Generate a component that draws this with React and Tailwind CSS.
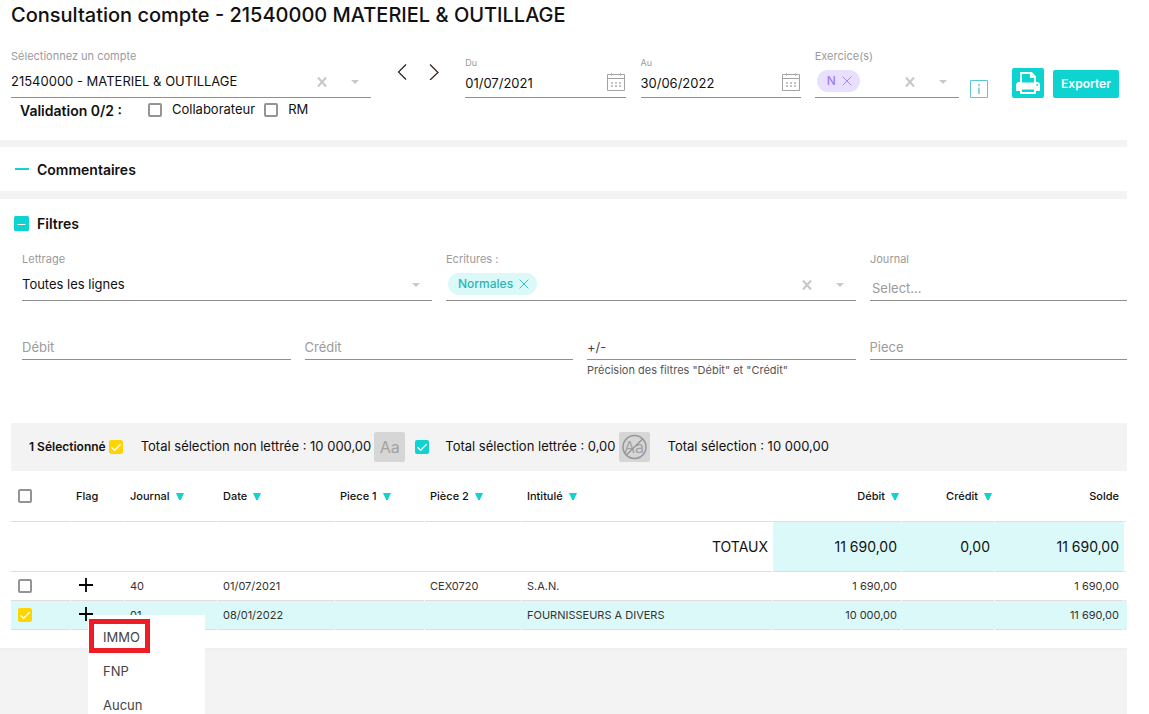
import { useState } from 'react';
import clsx from 'clsx';

const columns = [
  { label: 'Flag', width: 'w-[54px]' },
  { label: 'Journal', width: 'w-[93px]', sort: true },
  { label: 'Date', width: 'w-[117px]', sort: true },
  { label: 'Piece 1', width: 'w-[90px]', sort: true },
  { label: 'Pièce 2', width: 'w-[97px]', sort: true },
  { label: 'Intitulé', width: 'w-auto', sort: true },
  { label: 'Débit', width: 'w-[129px]', sort: true, align: 'text-right' },
  { label: 'Crédit', width: 'w-[93px]', sort: true, align: 'text-right' },
  { label: 'Solde', width: 'w-[129px]', align: 'text-right' },
];

const rows = [
  { id: 1, journal: '40', date: '01/07/2021', piece2: 'CEX0720', intitule: 'S.A.N.', debit: '1 690,00', solde: '1 690,00' },
  { id: 2, journal: '01', date: '08/01/2022', piece2: '', intitule: 'FOURNISSEURS A DIVERS', debit: '10 000,00', solde: '11 690,00' },
];

const flags = ['IMMO', 'FNP', 'Aucun'];

// Bottom border of a cell, with the small notch between two columns
const cellLine =
  "relative border-b border-[#dedede] after:absolute after:right-0 after:-bottom-px after:h-px after:w-px after:bg-white after:content-['']";

function Checkbox({ color = 'yellow', ...props }) {
  return (
    <span className="relative block size-[14px] shrink-0">
      <input
        type="checkbox"
        className={clsx(
          'peer block size-[14px] appearance-none rounded-[2px] border-2 border-[#949494] bg-white',
          color === 'yellow'
            ? 'checked:border-[#ffd400] checked:bg-[#ffd400]'
            : 'checked:border-[#0dd3d1] checked:bg-[#0dd3d1]',
        )}
        {...props}
      />
      <svg
        viewBox="0 0 14 14"
        className="pointer-events-none absolute inset-0 hidden size-[14px] peer-checked:block"
        fill="none"
        stroke="#fff"
        strokeWidth="1.4"
      >
        <path d="M2.5 7.2 5.6 10.2 11.6 4.2" />
      </svg>
    </span>
  );
}

function Caret() {
  return (
    <svg viewBox="0 0 8 4" className="pointer-events-none mr-[12px] h-1 w-2 shrink-0" fill="#c9c9c9">
      <path d="M0 0h8L4 4z" />
    </svg>
  );
}

function ClearButton({ label }) {
  return (
    <button type="button" aria-label={label} className="mr-[24px] shrink-0">
      <svg viewBox="0 0 10 10" className="size-[10px]" fill="none" stroke="#c9c9c9" strokeWidth="2.2">
        <path d="M1 .5 9 9.5M9 .5 1 9.5" />
      </svg>
    </button>
  );
}

function Chip({ children, className }) {
  return (
    <span className={clsx('flex h-[22px] shrink-0 items-center gap-[6px] rounded-full pl-[10px] pr-[8px] text-[12px] font-medium', className)}>
      {children}
      <button type="button" aria-label={`Retirer ${children}`}>
        <svg viewBox="0 0 10 10" className="size-[10px]" fill="none" stroke="currentColor" strokeWidth=".9">
          <path d="M.7.7 9.3 9.3M9.3.7.7 9.3" />
        </svg>
      </button>
    </span>
  );
}

function Field({ id, label, className, children }) {
  return (
    <div className={clsx('min-w-0', className)}>
      <label htmlFor={id} className="block text-[11px] leading-4 text-[#9b9b9b]">{label}</label>
      <div className="flex h-[34px] items-center border-b border-[#8f8f8f] pt-[3px]">{children}</div>
    </div>
  );
}

function DateField({ id, label, value, className }) {
  return (
    <div className={clsx('min-w-0', className)}>
      <label htmlFor={id} className="block text-[9px] leading-[14px] text-[#9b9b9b]">{label}</label>
      <div className="flex h-[28px] items-center border-b border-[#8f8f8f]">
        <input id={id} defaultValue={value} className="min-w-0 flex-1 text-[13px] outline-none" />
        <button type="button" aria-label={`Calendrier ${label}`} className="mb-1 shrink-0">
          <svg viewBox="0 0 20 20" className="size-5" fill="none" stroke="#a3a3a3">
            <path d="M1.5 2.5h17v16h-17zM1.5 6.5h17" />
            <path d="M5.5 1v3M14.5 1v3" stroke="#b5b5b5" />
            <path d="M5 11h2M9 11h2M13 11h2M5 14h2M9 14h2M13 14h2" stroke="#b0b0b0" strokeWidth="1.5" />
          </svg>
        </button>
      </div>
    </div>
  );
}

function TextField({ id, label, hint, ...props }) {
  return (
    <div className="min-w-0">
      <input
        id={id}
        aria-label={label}
        className="block h-[26px] w-full border-b border-[#8f8f8f] text-[13px] text-[#444] outline-none placeholder:text-[#9b9b9b]"
        {...props}
      />
      {hint && <p className="text-[11px] leading-5 text-[#555]">{hint}</p>}
    </div>
  );
}

function FlagMenu() {
  return (
    <div role="menu" className="absolute left-[17px] top-[14px] z-10 w-[117px] bg-white pt-1 text-left text-[13px] text-[#444]">
      {flags.map((flag) => (
        <button
          key={flag}
          type="button"
          role="menuitem"
          className={clsx(
            'ml-px flex h-[34px] items-center pt-[3px]',
            flag === 'IMMO' ? 'border-5 border-[#ee1c25] pl-[9px] pr-[5px]' : 'px-[14px]',
          )}
        >
          {flag}
        </button>
      ))}
    </div>
  );
}

function Header() {
  return (
    <header className="pl-[11px]">
      <h1 className="text-[20px] font-medium leading-[30px]">Consultation compte - 21540000 MATERIEL &amp; OUTILLAGE</h1>

      <div className="mt-[18px] flex items-end pr-2">
        <Field id="compte" label="Sélectionnez un compte" className="grow basis-[360px]">
          <select id="compte" className="min-w-0 flex-1 appearance-none text-[13px] outline-none">
            <option>21540000 - MATERIEL &amp; OUTILLAGE</option>
          </select>
          <ClearButton label="Effacer le compte" />
          <Caret />
        </Field>

        <div className="mx-[26px] mb-[18px] flex w-[42px] shrink-0 justify-between">
          <button type="button" aria-label="Compte précédent">
            <svg viewBox="0 0 10 16" className="h-4 w-[10px]" fill="none" stroke="#222" strokeWidth="1.2">
              <path d="M9 .5 1.5 8 9 15.5" />
            </svg>
          </button>
          <button type="button" aria-label="Compte suivant">
            <svg viewBox="0 0 10 16" className="h-4 w-[10px]" fill="none" stroke="#43221c" strokeWidth="1.3">
              <path d="M1 .5 9 8.5 1 16" />
            </svg>
          </button>
        </div>

        <DateField id="du" label="Du" value="01/07/2021" className="grow basis-[160px]" />
        <DateField id="au" label="Au" value="30/06/2022" className="ml-[15px] grow basis-[160px]" />

        <Field id="exercice" label="Exercice(s)" className="ml-[14px] grow basis-[144px]">
          <div className="flex min-w-0 flex-1 pl-[2px]">
            <Chip className="bg-[#e9e0ff] text-[#a67af4]">N</Chip>
            <input id="exercice" className="min-w-0 flex-1 outline-none" />
          </div>
          <ClearButton label="Effacer les exercices" />
          <Caret />
        </Field>

        <button type="button" aria-label="Informations" className="ml-[11px] shrink-0">
          <svg viewBox="0 0 18 18" className="size-[18px]" fill="none" stroke="#5cc9d2">
            <path d="M.5.5h17v17H.5z" />
            <path d="M9 4v2M9 7.5V14" strokeWidth="1.4" />
          </svg>
        </button>

        <button type="button" aria-label="Imprimer" className="ml-6 flex h-[30px] w-8 shrink-0 items-center justify-center rounded-[2px] bg-[#0dd3d1]">
          <svg viewBox="0 0 24 22" className="h-[22px] w-6" fill="#fff">
            <path d="M3 10h18c1.700 0 3 1.300 3 3v5.300c0 .4-.3.700-.7.700H.7c-.4 0-.7-.3-.7-.7V13c0-1.700 1.300-3 3-3z" />
            <path d="M5 11.500V1h10.500L19 4.500v7z" fill="#0dd3d1" stroke="#fff" strokeWidth="1.800" />
            <path d="M14.500 1v4.500H19" stroke="#fff" strokeWidth="1.200" />
            <path d="M4 12h16v2H4z" />
            <path d="M5 16.500h14V21H5z" fill="#0dd3d1" stroke="#fff" strokeWidth="1.800" />
            <circle cx="21.300" cy="13" r=".9" fill="#0dd3d1" />
          </svg>
        </button>

        <button type="button" className="ml-[9px] h-[28px] w-[66px] shrink-0 rounded-[2px] bg-[#0dd3d1] text-[12px] font-semibold text-white">
          Exporter
        </button>
      </div>

      <div className="flex h-6 items-center pl-[9px] text-[13px]">
        <span className="mr-[26px] text-[14px] font-semibold">Validation 0/2 :</span>
        <label className="mr-[9px] flex items-center gap-[10px]">
          <Checkbox />
          Collaborateur
        </label>
        <label className="flex items-center gap-[10px]">
          <Checkbox />
          RM
        </label>
      </div>
    </header>
  );
}

function Filters() {
  return (
    <section className="pl-[11px]">
      <h2 className="text-[14px] font-semibold">
        <button type="button" className="flex h-12 items-center gap-[8px] pl-[3px]">
          <svg viewBox="0 0 15 15" className="size-[15px]">
            <rect width="15" height="15" rx="1.5" fill="#0dd3d1" />
            <path d="M3.5 8.5h8" stroke="#fff" />
          </svg>
          Filtres
        </button>
      </h2>

      <div className="mt-1 grid grid-cols-[410fr_410fr_257fr] gap-[14px] pl-[11px]">
        <Field id="lettrage" label="Lettrage">
          <select id="lettrage" className="min-w-0 flex-1 appearance-none text-[13px] outline-none">
            <option>Toutes les lignes</option>
          </select>
          <Caret />
        </Field>
        <Field id="ecritures" label="Ecritures :">
          <div className="flex min-w-0 flex-1 pl-[2px]">
            <Chip className="bg-[#dbf9f9] text-[#2cb5b5]">Normales</Chip>
            <input id="ecritures" className="min-w-0 flex-1 outline-none" />
          </div>
          <ClearButton label="Effacer les écritures" />
          <Caret />
        </Field>
        <Field id="journal" label="Journal">
          <input
            id="journal"
            placeholder="Select..."
            className="h-full min-w-0 flex-1 pl-[2px] pt-[6px] text-[13px] outline-none placeholder:text-[#9b9b9b]"
          />
        </Field>
      </div>

      <div className="mt-[33px] grid grid-cols-[268fr_268fr_268fr_257fr] gap-[14px] pl-[11px]">
        <TextField id="debit" label="Débit" placeholder="Débit" />
        <TextField id="credit" label="Crédit" placeholder="Crédit" />
        <TextField id="precision" label="Précision" defaultValue="+/-" hint={'Précision des filtres "Débit" et "Crédit"'} />
        <TextField id="piece" label="Piece" placeholder="Piece" />
      </div>
    </section>
  );
}

function SelectionBar() {
  return (
    <div className="flex h-12 items-center bg-[#f3f3f3] pl-[18px] text-[13px]">
      <label className="flex items-center gap-[3px] text-[12px] font-semibold">
        1 Sélectionné
        <Checkbox defaultChecked />
      </label>
      <span className="ml-[18px]">Total sélection non lettrée : 10 000,00</span>
      <button type="button" aria-label="Lettrer" className="ml-[3px] h-[30px] w-[31px] rounded-[2px] bg-[#d6d6d6] text-[16px] text-[#a3a3a3]">
        Aa
      </button>
      <label className="ml-[10px] flex items-center gap-4">
        <Checkbox color="cyan" defaultChecked />
        Total sélection lettrée : 0,00
      </label>
      <button type="button" aria-label="Délettrer" className="relative ml-[3px] h-[30px] w-[31px] rounded-[2px] bg-[#d6d6d6] text-[16px] text-[#a3a3a3]">
        Aa
        <svg viewBox="0 0 31 30" className="absolute inset-0 h-[30px] w-[31px]" fill="none" stroke="#969696" strokeWidth="1.5">
          <circle cx="15.5" cy="15" r="11.5" />
          <path d="M7.5 23 23.5 7" />
        </svg>
      </button>
      <span className="ml-[18px]">Total sélection : 10 000,00</span>
    </div>
  );
}

function EntriesTable() {
  const [selected, setSelected] = useState([2]);
  const toggle = (id) =>
    setSelected((ids) => (ids.includes(id) ? ids.filter((i) => i !== id) : [...ids, id]));

  return (
    <table className="w-full table-fixed border-separate border-spacing-0 text-[11px]">
      <thead>
        <tr className="h-[51px]">
          <th className={clsx('w-[60px] pl-[7px] text-left', cellLine)}>
            <Checkbox aria-label="Tout sélectionner" />
          </th>
          {columns.map(({ label, width, sort, align = 'text-left' }) => (
            <th key={label} className={clsx('px-[5px] font-medium', width, align, cellLine)}>
              {sort ? (
                <button type="button" className={clsx('inline-flex items-center gap-[6px]', align === 'text-right' && '-mr-[2px]')}>
                  {label}
                  <svg viewBox="0 0 8 7" className="h-[7px] w-2" fill="#0dd3d1">
                    <path d="M0 0h8L4.8 7H3.2z" />
                  </svg>
                </button>
              ) : label}
            </th>
          ))}
          <th className={clsx('w-[3px]', cellLine)} />
        </tr>
      </thead>
      <tbody>
        <tr className="h-[50px] text-[14px]">
          <td colSpan={7} className={clsx('pr-[5px] text-right', cellLine)}>TOTAUX</td>
          <td className={clsx('bg-[#dbf9f9] pr-[5px] text-right', cellLine)}>11 690,00</td>
          <td className={clsx('bg-[#dbf9f9] pr-[5px] text-right', cellLine)}>0,00</td>
          <td className={clsx('bg-[#dbf9f9] pr-[5px] text-right', cellLine)}>11 690,00</td>
          <td className={cellLine} />
        </tr>
        {rows.map((row) => (
          <tr key={row.id} className={clsx('h-[29px] text-[#333]', selected.includes(row.id) && 'bg-[#dbf9f9]')}>
            <td className={clsx('pl-[7px]', cellLine)}>
              <Checkbox
                aria-label={`Sélectionner ${row.intitule}`}
                checked={selected.includes(row.id)}
                onChange={() => toggle(row.id)}
              />
            </td>
            <td className={clsx('pl-[8px]', cellLine)}>
              <button type="button" aria-label="Ajouter un flag" className="block pb-[2px]">
                <svg viewBox="0 0 14 14" className="size-[14px]" stroke="#000" strokeWidth="1.8">
                  <path d="M7 0v14M0 7h14" />
                </svg>
              </button>
              {row.id === 2 && <FlagMenu />}
            </td>
            <td className={clsx('pl-[5px]', cellLine)}>{row.journal}</td>
            <td className={clsx('pl-[5px]', cellLine)}>{row.date}</td>
            <td className={cellLine} />
            <td className={clsx('pl-[5px]', cellLine)}>{row.piece2}</td>
            <td className={clsx('pl-[5px]', cellLine)}>{row.intitule}</td>
            <td className={clsx('pr-[5px] text-right', cellLine)}>{row.debit}</td>
            <td className={cellLine} />
            <td className={clsx('pr-[5px] text-right', cellLine)}>{row.solde}</td>
            <td className={cellLine} />
          </tr>
        ))}
      </tbody>
    </table>
  );
}

export default function App() {
  return (
    <div className="flex min-h-screen flex-col overflow-hidden bg-white pr-[22px] font-['Inter','Liberation_Sans',sans-serif] text-[#111]">
      <Header />

      {/* Commentaires */}
      <section className="mt-[18px] border-y-8 border-t-7 border-[#f3f3f3]">
        <h2 className="text-[14px] font-semibold">
          <button type="button" className="flex h-11 items-center gap-[8px] pl-[15px]">
            <span className="h-[2px] w-[14px] bg-[#0dd3d1]" />
            Commentaires
          </button>
        </h2>
      </section>

      <Filters />

      <main className="mt-[43px] pb-[18px] pl-[11px]">
        <SelectionBar />
        <EntriesTable />
      </main>

      <div className="flex-1 border-t-3 border-[#f0f0f0] bg-[#f3f3f3]" />
    </div>
  );
}
